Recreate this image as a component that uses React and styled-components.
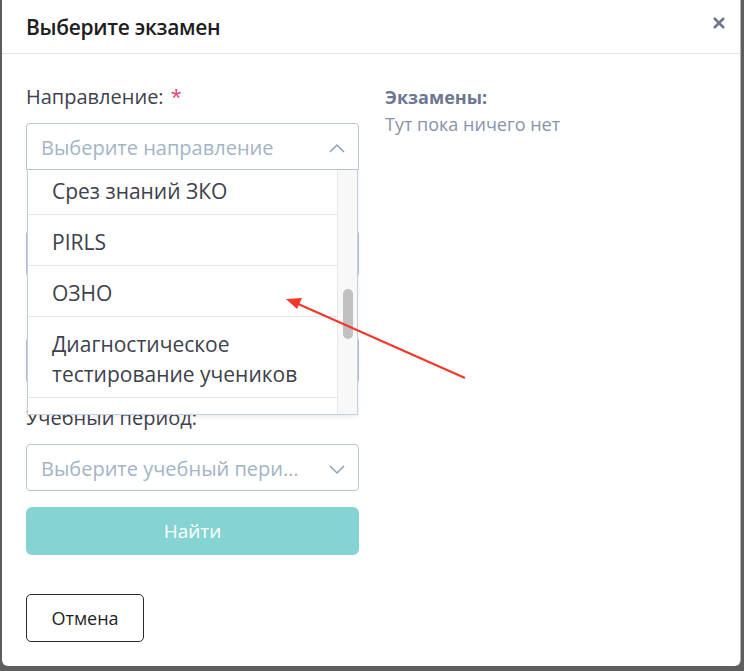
import React from 'react';
import styled, { createGlobalStyle } from 'styled-components';

const GlobalStyle = createGlobalStyle`
  html, body {
    margin: 0;
    padding: 0;
    background: #5e5e5e;
    font-family: "Open Sans", "Liberation Sans", sans-serif;
  }
`;

const Page = styled.div`
  width: 744px;
  height: 671px;
  overflow: hidden;
`;

const Modal = styled.div`
  position: relative;
  margin-left: 2px;
  width: 739px;
  height: 666px;
  background: #fff;
  border-right: 1px solid #b3b3b3;
  border-radius: 0 0 6px 6px;
  box-sizing: border-box;
  display: flex;
  flex-direction: column;
`;

const Header = styled.div`
  height: 54px;
  box-sizing: border-box;
  padding: 1px 24px 0;
  border-bottom: 1px solid #e1e4ea;
  display: flex;
  align-items: center;
  justify-content: space-between;
`;

const Title = styled.h2`
  margin: 0;
  font-size: 21px;
  font-weight: 600;
  color: #1c1d21;
  letter-spacing: -0.3px;
`;

const Close = styled.button`
  border: 0;
  background: none;
  padding: 0;
  margin-right: -13px;
  margin-top: -8px;
  width: 20px;
  height: 20px;
  display: flex;
  align-items: center;
  justify-content: center;
  cursor: pointer;
`;

const Body = styled.div`
  display: grid;
  grid-template-columns: 333px 1fr;
  column-gap: 26px;
  padding: 31px 24px 0;
`;

const Form = styled.div`
  display: flex;
  flex-direction: column;
`;

const Field = styled.div`
  position: relative;
  display: flex;
  flex-direction: column;
  gap: 14px;
  margin-bottom: ${(p) => (p.last ? '16px' : '22px')};
`;

const Label = styled.div`
  font-size: 20px;
  line-height: 24px;
  color: #3d414c;
  white-space: nowrap;
`;

const Required = styled.span`
  color: #ef3a78;
  margin-left: 7px;
`;

const Select = styled.div`
  height: 47px;
  box-sizing: border-box;
  border: 1px solid #b7c5d4;
  border-radius: ${(p) => (p.open ? '4px 4px 0 0' : '4px')};
  display: flex;
  align-items: center;
  justify-content: space-between;
  padding: 2px 12px 0 14px;
`;

const Placeholder = styled.span`
  font-size: 20px;
  color: #a3b4c6;
  white-space: nowrap;
  overflow: hidden;
  text-overflow: ellipsis;
  max-width: 258px;
`;

const Dropdown = styled.div`
  position: absolute;
  top: 100%;
  left: 1px;
  right: 1px;
  height: 245px;
  background: #fff;
  border: 1px solid #c4d0dc;
  border-top: 0;
  box-sizing: border-box;
  display: flex;
  z-index: 2;
  box-shadow: 0 2px 4px rgba(0, 0, 0, 0.08);
`;

const OptionList = styled.div`
  flex: 1;
  overflow: hidden;
`;

const OptionScroll = styled.div`
  margin-top: -6px;
`;

const Option = styled.div`
  padding: 12px 24px 8px;
  font-size: 21px;
  line-height: 30px;
  color: #3d414c;
  border-bottom: 1px solid #e2e5eb;
`;

const Track = styled.div`
  width: 20px;
  background: #f8f8f8;
  border-left: 1px solid #e6e6e6;
  display: flex;
  justify-content: center;
  padding-top: 119px;
  box-sizing: border-box;
`;

const Thumb = styled.div`
  width: 10px;
  height: 50px;
  border-radius: 5px;
  background: #c1c1c1;
`;

const SearchButton = styled.button`
  height: 48px;
  border: 0;
  border-radius: 6px;
  background: #86d3d3;
  color: #fff;
  font-family: inherit;
  font-size: 19px;
`;

const Side = styled.div`
  padding-top: 0;
`;

const SideTitle = styled.div`
  font-size: 18px;
  font-weight: 700;
  color: #6c7792;
  line-height: 24px;
`;

const SideText = styled.div`
  margin-top: 3px;
  font-size: 18px;
  color: #8793aa;
  line-height: 24px;
`;

const Footer = styled.div`
  padding: 39px 24px 0;
`;

const CancelButton = styled.button`
  width: 118px;
  height: 48px;
  border: 1px solid #2b2b2b;
  border-radius: 5px;
  background: #fff;
  font-family: inherit;
  font-size: 18px;
  color: #1f1f1f;
`;

const Annotation = styled.svg`
  position: absolute;
  inset: 0;
  pointer-events: none;
  z-index: 3;
`;

const Chevron = ({ up }) => (
  <svg width="18" height="12" viewBox="0 0 18 12">
    <path
      d={up ? 'M2 10 L9 3 L16 10' : 'M2 3 L9 10 L16 3'}
      fill="none"
      stroke="#8fa2b7"
      strokeWidth="1.5"
    />
  </svg>
);

const options = [
  'Срез знаний ЗКО',
  'PIRLS',
  'ОЗНО',
  'Диагностическое тестирование учеников',
  'Итоговая аттестация',
];

export default function App() {
  return (
    <Page>
      <GlobalStyle />
      <Modal>
        <Header>
          <Title>Выберите экзамен</Title>
          <Close aria-label="close">
            <svg width="14" height="14" viewBox="0 0 14 14">
              <path d="M2 2 L12 12 M12 2 L2 12" stroke="#6d7790" strokeWidth="2.6" />
            </svg>
          </Close>
        </Header>
        <Body>
          <Form>
            <Field>
              <Label>
                Направление:<Required>*</Required>
              </Label>
              <Select open>
                <Placeholder>Выберите направление</Placeholder>
                <Chevron up />
              </Select>
              <Dropdown>
                <OptionList>
                  <OptionScroll>
                    {options.map((o) => (
                      <Option key={o}>{o}</Option>
                    ))}
                  </OptionScroll>
                </OptionList>
                <Track>
                  <Thumb />
                </Track>
              </Dropdown>
            </Field>
            <Field>
              <Label>Предмет:</Label>
              <Select>
                <Placeholder>Выберите предмет</Placeholder>
                <Chevron />
              </Select>
            </Field>
            <Field>
              <Label>Класс:</Label>
              <Select>
                <Placeholder>Выберите класс</Placeholder>
                <Chevron />
              </Select>
            </Field>
            <Field last>
              <Label>Учебный период:</Label>
              <Select>
                <Placeholder>Выберите учебный период</Placeholder>
                <Chevron />
              </Select>
            </Field>
            <SearchButton>Найти</SearchButton>
          </Form>
          <Side>
            <SideTitle>Экзамены:</SideTitle>
            <SideText>Тут пока ничего нет</SideText>
          </Side>
        </Body>
        <Footer>
          <CancelButton>Отмена</CancelButton>
        </Footer>
        <Annotation width="739" height="666" viewBox="0 0 739 666">
          <line x1="463" y1="378" x2="294" y2="303" stroke="#f2382b" strokeWidth="2.2" />
          <path d="M284 299 L300 298 L295 309 Z" fill="#f2382b" />
        </Annotation>
      </Modal>
    </Page>
  );
}
